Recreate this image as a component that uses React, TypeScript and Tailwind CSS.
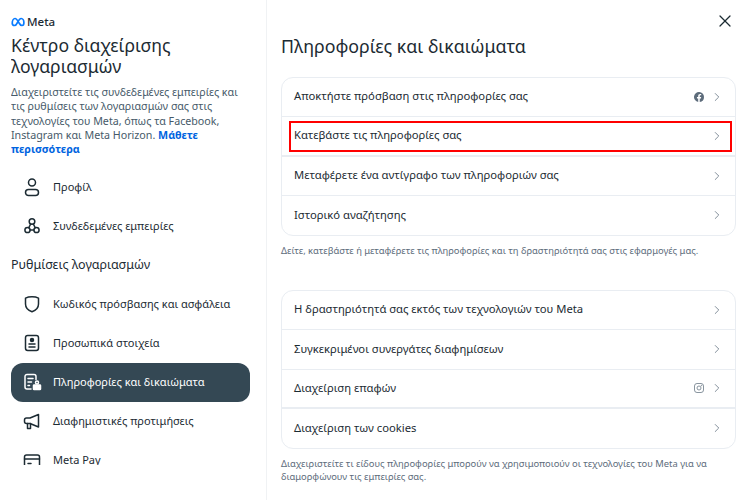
import { ChevronRight, X } from "lucide-react";
import type { ReactNode } from "react";

const ink = "#1c2b33";

function MetaLogo() {
  return (
    <svg width="14" height="10" viewBox="0 0 28 20" fill="none">
      <path
        d="M2.500 12.500C2.500 7 5 3 8 3c3.500 0 6 5 8.500 9.500C18 15.500 19.800 17 22 17c2.400 0 3.800-2 3.800-5.500C25.800 6.500 23.500 3 20.500 3c-3 0-5.200 3.500-7.500 8-2 4-3.500 6-6 6-2.700 0-4.500-2-4.500-4.500Z"
        stroke="#0a7cff"
        strokeWidth="3.400"
        strokeLinejoin="round"
      />
    </svg>
  );
}

function Icon({ children }: { children: ReactNode }) {
  return (
    <svg
      width="20"
      height="20"
      viewBox="0 0 20 20"
      fill="none"
      stroke="currentColor"
      strokeWidth="1.500"
      strokeLinecap="round"
      strokeLinejoin="round"
    >
      {children}
    </svg>
  );
}

const ProfileIcon = () => (
  <Icon>
    <circle cx="10" cy="5.500" r="3.500" />
    <rect x="3.500" y="12.500" width="13" height="6" rx="3" />
  </Icon>
);

const NodesIcon = () => (
  <Icon>
    <circle cx="10" cy="5.500" r="2.800" />
    <circle cx="5.500" cy="14" r="2.600" />
    <circle cx="14.500" cy="14" r="2.600" />
    <path d="M8.700 8 6.800 11.700M11.300 8l1.900 3.700M8.100 14h3.800" />
  </Icon>
);

const ShieldIcon = () => (
  <Icon>
    <path d="M10 2.800c2.500 0 4.800.5 6.500 1.400v5.800c0 3.800-2.700 6.400-6.500 7.700-3.800-1.300-6.500-3.900-6.500-7.700V4.200C5.200 3.300 7.500 2.800 10 2.800Z" />
  </Icon>
);

const IdIcon = () => (
  <Icon>
    <rect x="3.500" y="2.500" width="13" height="15" rx="2.200" />
    <circle cx="10" cy="7" r="1.500" fill="currentColor" />
    <path d="M7 11h6M7 14h6" />
  </Icon>
);

const DataIcon = () => (
  <Icon>
    <path d="M9 17H5a2 2 0 0 1-2-2V4.500a2 2 0 0 1 2-2h7a2 2 0 0 1 2 2V7.500" />
    <path d="M6 6.500h5M6 10h3.500M6 13.500h1.500" />
    <rect x="11.500" y="13" width="7" height="4.500" rx=".6" fill="currentColor" />
    <circle cx="15" cy="10.500" r="1.500" />
  </Icon>
);

const MegaphoneIcon = () => (
  <Icon>
    <path d="M16.500 3.500 8 7H4.500a2 2 0 0 0-2 2v1.500a2 2 0 0 0 2 2H8l8.500 3.500Z" />
    <path d="M5.500 12.500V17.500H8.500V12.500" />
  </Icon>
);

const CardIcon = () => (
  <Icon>
    <rect x="2.500" y="5" width="15" height="13" rx="2" />
    <path d="M2.500 9h15M6 13.500h3" />
  </Icon>
);

function FacebookGlyph() {
  return (
    <svg width="10" height="10" viewBox="0 0 20 20">
      <path
        fill="#5d6c7b"
        d="M20 10a10 10 0 1 0-11.600 9.900v-7H5.900V10h2.500V7.800c0-2.500 1.500-3.900 3.800-3.900 1.100 0 2.200.2 2.200.2v2.500h-1.300c-1.200 0-1.600.8-1.600 1.600V10h2.800l-.4 2.900h-2.400v7A10 10 0 0 0 20 10Z"
      />
    </svg>
  );
}

function InstagramGlyph() {
  return (
    <svg width="10" height="10" viewBox="0 0 20 20" fill="none" stroke="#7c8994" strokeWidth="1.800">
      <rect x="1" y="1" width="18" height="18" rx="5" />
      <circle cx="10" cy="10" r="4" />
      <circle cx="15" cy="5" r=".6" fill="#7c8994" />
    </svg>
  );
}

function NavItem({ icon, label, active }: { icon: ReactNode; label: string; active?: boolean }) {
  return (
    <div
      className={
        active
          ? "flex h-[39px] shrink-0 items-center gap-[11px] rounded-[12px] bg-[#344854] pl-[11px] text-white"
          : "flex h-[39px] shrink-0 items-center gap-[11px] pl-[11px] text-[#1c2b33]"
      }
    >
      <span className="flex w-[20px] shrink-0 justify-center">{icon}</span>
      <span className="text-[11px]">{label}</span>
    </div>
  );
}

function Row({
  label,
  glyph,
  boxed,
  thick,
}: {
  label: string;
  glyph?: ReactNode;
  boxed?: boolean;
  thick?: boolean;
}) {
  return (
    <div
      className={
        thick
          ? "relative flex h-[39.500px] items-center border-b-2 border-[#e9edf2] pr-[11px] pl-[12px]"
          : "relative flex h-[39.500px] items-center border-b border-[#e9edf2] pr-[11px] pl-[12px] last:h-[38.500px] last:border-b-0"
      }
    >
      <span className="flex-1 text-[11.250px] text-[#1c2b33]">{label}</span>
      {glyph && <span className="mr-[6px] flex">{glyph}</span>}
      <ChevronRight size={14} strokeWidth={1.3} className="text-[#5d6c7b]" />
      {boxed && (
        <div className="absolute top-[4px] right-[3px] left-[7px] h-[31px] border-2 border-[#ff0000]" />
      )}
    </div>
  );
}

export default function App() {
  return (
    <div
      className="flex h-[500px] w-[750px] overflow-hidden bg-white"
      style={{ fontFamily: '"Noto Sans", sans-serif', color: ink }}
    >
      <aside className="flex h-[500px] w-[267px] shrink-0 flex-col border-r border-[#f0f2f4] pl-[11px]">
        <div className="flex h-[465px] flex-col overflow-hidden">
          <div className="mt-[15px] flex h-[13px] items-center gap-[2px]">
            <MetaLogo />
            <span className="text-[11.500px] font-medium">Meta</span>
          </div>
          <h1 className="mt-[7px] text-[17.600px] leading-[21px] font-normal">
            Κέντρο διαχείρισης
            <br />
            λογαριασμών
          </h1>
          <p className="mt-[8px] w-[235px] text-[10.700px] leading-[14.300px] text-[#465a69]">
            Διαχειριστείτε τις συνδεδεμένες εμπειρίες και τις ρυθμίσεις των λογαριασμών σας στις
            τεχνολογίες του Meta, όπως τα Facebook, Instagram και Meta Horizon.{" "}
            <span className="font-bold text-[#0064e0]">Μάθετε περισσότερα</span>
          </p>
          <div className="mt-[11.500px] flex w-[239px] flex-col">
            <NavItem icon={<ProfileIcon />} label="Προφίλ" />
            <NavItem icon={<NodesIcon />} label="Συνδεδεμένες εμπειρίες" />
            <div className="flex h-[39px] shrink-0 items-center text-[12.500px]">
              Ρυθμίσεις λογαριασμών
            </div>
            <NavItem icon={<ShieldIcon />} label="Κωδικός πρόσβασης και ασφάλεια" />
            <NavItem icon={<IdIcon />} label="Προσωπικά στοιχεία" />
            <NavItem icon={<DataIcon />} label="Πληροφορίες και δικαιώματα" active />
            <NavItem icon={<MegaphoneIcon />} label="Διαφημιστικές προτιμήσεις" />
            <NavItem icon={<CardIcon />} label="Meta Pay" />
          </div>
        </div>
      </aside>

      <main className="relative flex-1 pr-[14px] pl-[14px]">
        <button className="absolute top-[11px] right-[15px] text-[#1c2b33]">
          <X size={20} strokeWidth={1.5} />
        </button>
        <h2 className="mt-[34.500px] text-[17.800px] leading-[23px] font-normal">Πληροφορίες και δικαιώματα</h2>
        <div className="mt-[19px] overflow-hidden rounded-[12px] border border-[#e9edf2]">
          <Row label="Αποκτήστε πρόσβαση στις πληροφορίες σας" glyph={<FacebookGlyph />} />
          <Row label="Κατεβάστε τις πληροφορίες σας" boxed thick />
          <Row label="Μεταφέρετε ένα αντίγραφο των πληροφοριών σας" />
          <Row label="Ιστορικό αναζήτησης" />
        </div>
        <p className="mt-[8px] text-[9.400px] leading-[13px] text-[#5d6c7b]">
          Δείτε, κατεβάστε ή μεταφέρετε τις πληροφορίες και τη δραστηριότητά σας στις εφαρμογές μας.
        </p>
        <div className="mt-[33px] overflow-hidden rounded-[12px] border border-[#e9edf2]">
          <Row label="Η δραστηριότητά σας εκτός των τεχνολογιών του Meta" />
          <Row label="Συγκεκριμένοι συνεργάτες διαφημίσεων" />
          <Row label="Διαχείριση επαφών" glyph={<InstagramGlyph />} thick />
          <Row label="Διαχείριση των cookies" />
        </div>
        <p className="mt-[8px] text-[9.400px] leading-[13px] text-[#5d6c7b]">
          Διαχειριστείτε τι είδους πληροφορίες μπορούν να χρησιμοποιούν οι τεχνολογίες του Meta για να
          διαμορφώνουν τις εμπειρίες σας.
        </p>
      </main>
    </div>
  );
}
